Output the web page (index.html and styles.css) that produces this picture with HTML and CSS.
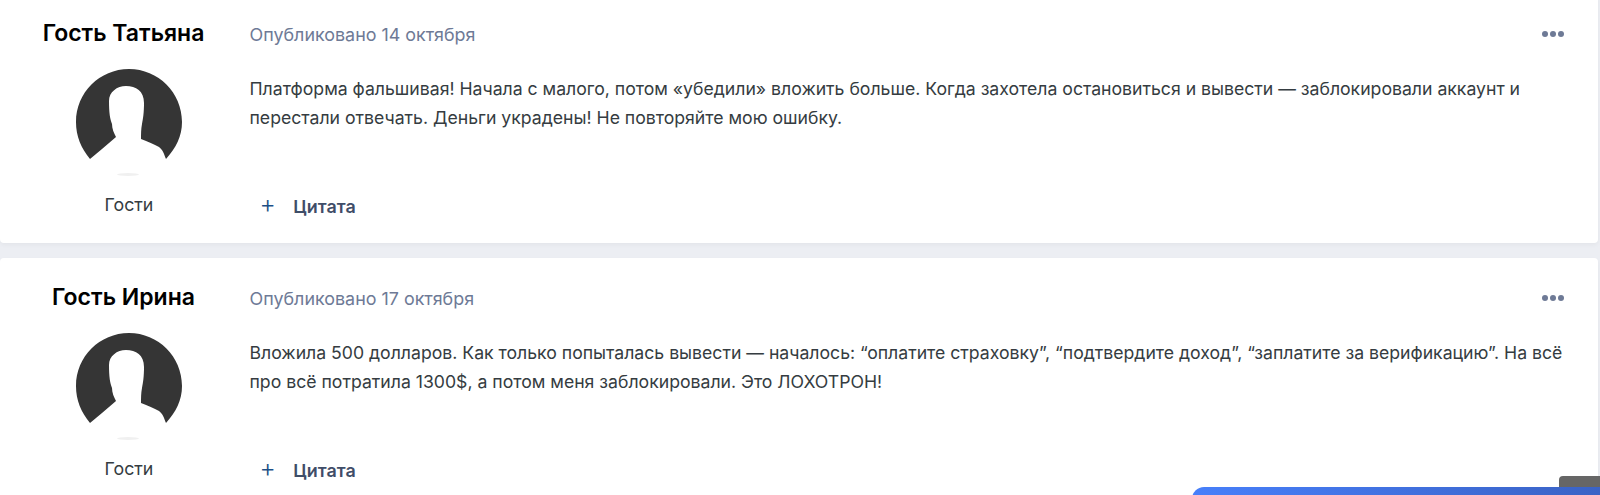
FILE: index.html
```html
<!DOCTYPE html>
<html lang="ru">
<head>
    <meta charset="UTF-8">
    <meta name="viewport" content="width=device-width, initial-scale=1.0">
    <title>Отзывы</title>
    <link rel="stylesheet" href="styles.css">
</head>
<body>

    <svg class="sprite" width="0" height="0">
        <symbol id="guest" viewBox="0 0 106 108">
            <path fill="#353535" d="M53 0C23.700 0 0 23.700 0 53C0 67 5 79 14 90L26 80L40 68C38 64 36 60 36 55C34 50 33 44 33 32C33 23 41 17 50 17C60 17 68 22 68 34C68 44 67 50 66 55C65 60 65 65 65 70C72 73 78 75 83 78C87 81 88 85 90 90C100 79 106 67 106 53C106 23.700 82.300 0 53 0Z"/>
            <ellipse cx="52" cy="105.500" rx="11" ry="1.500" fill="#f0f0f0"/>
        </symbol>
    </svg>

    <div class="page">
        <!-- Post 1 -->
        <div class="post">
            <div class="author">
                <h3>Гость Татьяна</h3>
                <svg class="avatar"><use href="#guest"/></svg>
                <p class="group">Гости</p>
            </div>
            <div class="content">
                <div class="meta">
                    <span>Опубликовано 14 октября</span>
                    <span class="dots"><i></i><i></i><i></i></span>
                </div>
                <p class="text">Платформа фальшивая! Начала с малого, потом «убедили» вложить больше. Когда захотела остановиться и вывести — заблокировали аккаунт и перестали отвечать. Деньги украдены! Не повторяйте мою ошибку.</p>
                <div class="actions"><span class="plus">+</span> Цитата</div>
            </div>
        </div>

        <!-- Post 2 -->
        <div class="post">
            <div class="author">
                <h3>Гость Ирина</h3>
                <svg class="avatar"><use href="#guest"/></svg>
                <p class="group">Гости</p>
            </div>
            <div class="content">
                <div class="meta">
                    <span>Опубликовано 17 октября</span>
                    <span class="dots"><i></i><i></i><i></i></span>
                </div>
                <p class="text">Вложила 500 долларов. Как только попыталась вывести — началось: “оплатите страховку”, “подтвердите доход”, “заплатите за верификацию”. На всё про всё потратила 1300$, а потом меня заблокировали. Это ЛОХОТРОН!</p>
                <div class="actions"><span class="plus">+</span> Цитата</div>
            </div>
        </div>
    </div>

    <div class="scroll-top"></div>
    <div class="chat-bar"></div>

</body>
</html>
```

FILE: styles.css
```css
html, body {
    height: 100%;
}
body {
    margin: 0;
    overflow: hidden;
    position: relative;
    font-family: Inter, "Noto Sans", sans-serif;
    font-size: 17.650px;
    color: #353c41;
    background-color: #eceef3;
}
.sprite {
    display: block;
}
.page {
    display: flex;
    flex-direction: column;
    gap: 15px;
    margin-top: -6px;
}
.post {
    display: flex;
    flex-shrink: 0;
    width: 1598px;
    height: 249px;
    background-color: #fff;
    border-radius: 4px;
    box-shadow: 0 2px 4px rgba(0, 0, 0, 0.04);
}
.author {
    width: 249.500px;
    flex-shrink: 0;
    padding-top: 26px;
    text-align: center;
}
.author h3 {
    width: 247px;
    margin: 0;
    font-size: 23px;
    line-height: 26px;
    font-weight: 600;
    color: #000;
}
.avatar {
    display: block;
    width: 106px;
    height: 108px;
    margin: 23px 0 0 76px;
}
.group {
    width: 258px;
    margin: 16px 0 0;
    font-size: 17.800px;
    line-height: 24px;
}
.content {
    flex: 1;
    display: flex;
    flex-direction: column;
    padding-top: 28px;
    padding-right: 32px;
}
.meta {
    display: flex;
    justify-content: space-between;
    align-items: center;
    height: 24px;
    font-size: 17.900px;
    color: #6e7a96;
}
.dots {
    display: flex;
    gap: 2px;
    margin-right: 2px;
}
.dots i {
    width: 6px;
    height: 6px;
    border-radius: 50%;
    background-color: #6e7a96;
}
.text {
    margin: 28px 0 0;
    line-height: 29px;
}
.actions {
    margin-top: auto;
    margin-bottom: 24.500px;
    padding-left: 10px;
    font-size: 17.900px;
    line-height: 24px;
    font-weight: 600;
    color: #3f4d68;
}
.plus {
    margin-right: 13px;
    font-size: 25px;
    font-weight: 300;
    color: #1d4f86;
}
.scroll-top {
    position: absolute;
    left: 1559px;
    top: 476px;
    width: 60px;
    height: 40px;
    border-radius: 4px;
    background-color: #666;
}
.chat-bar {
    position: absolute;
    left: 1192px;
    top: 487px;
    width: 420px;
    height: 40px;
    border-radius: 12px 12px 0 0;
    background: linear-gradient(90deg, #477ffa, #3a62c4);
}
```
